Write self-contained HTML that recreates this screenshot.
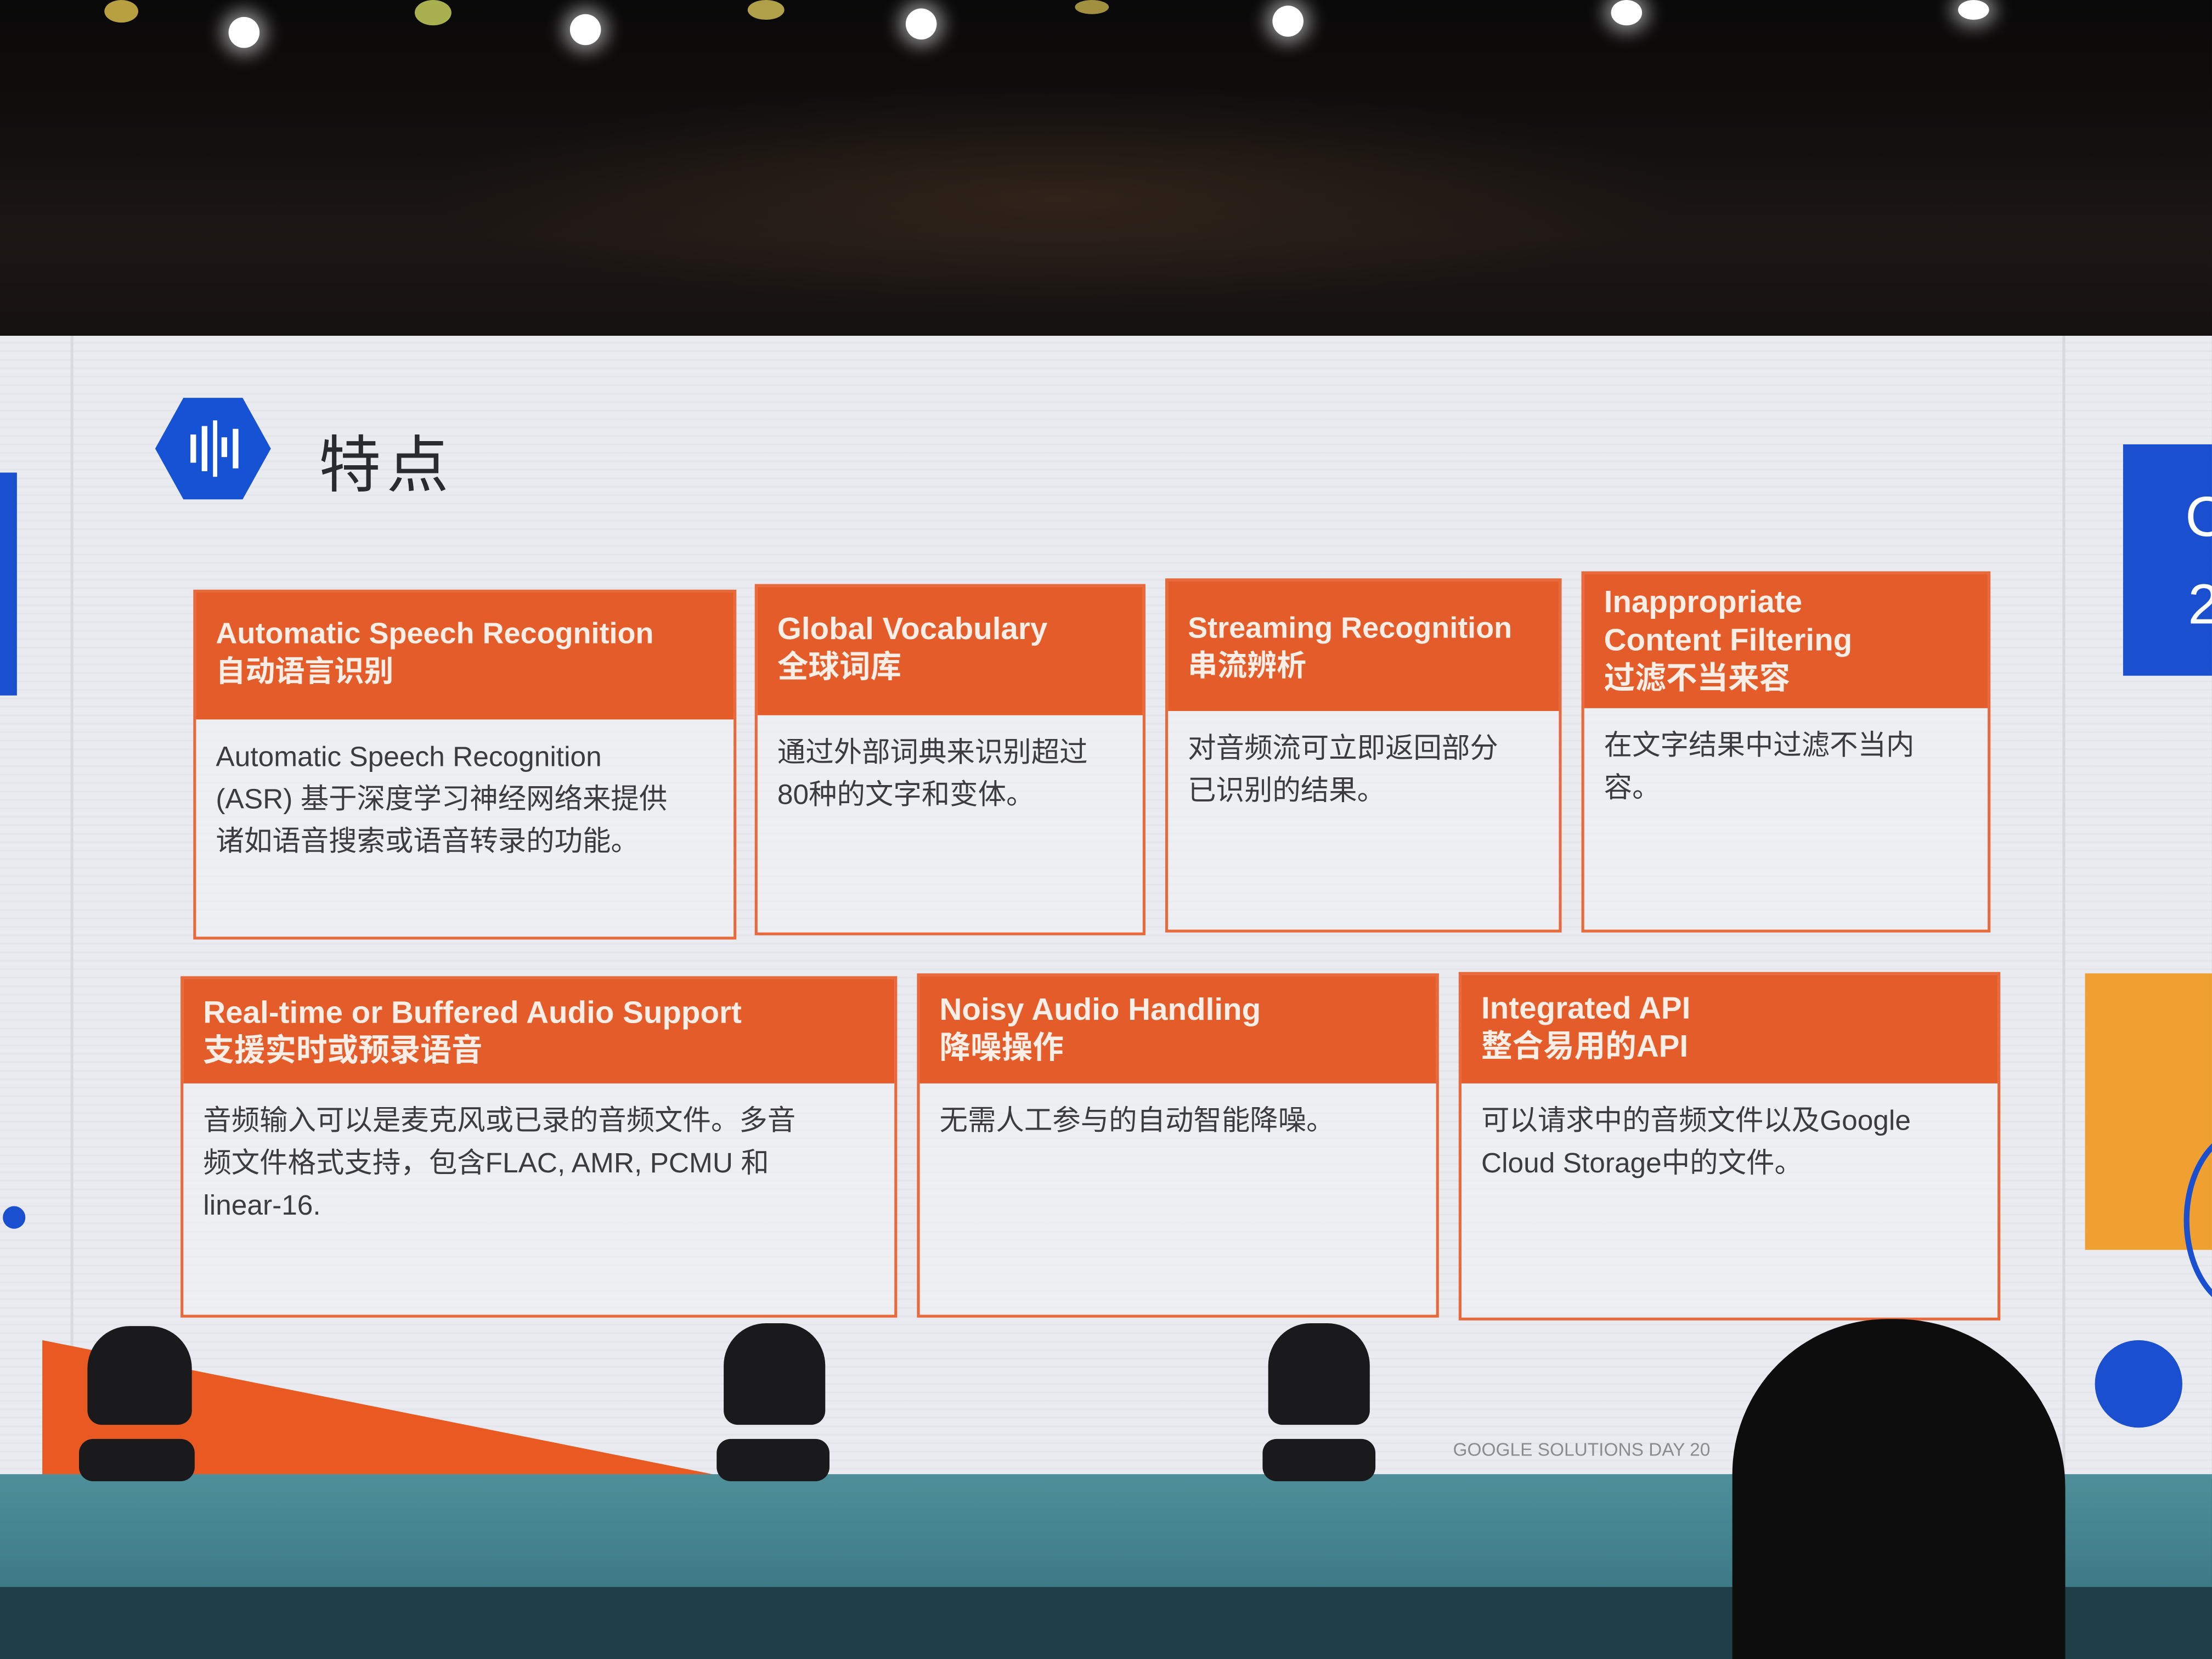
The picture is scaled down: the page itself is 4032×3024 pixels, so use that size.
<!DOCTYPE html>
<html><head><meta charset="utf-8">
<style>
html,body{margin:0;padding:0;width:4032px;height:3024px;overflow:hidden;background:#1f3f48;}
#s{position:absolute;left:0;top:0;width:1568px;height:1176px;transform:scale(2.5714);transform-origin:0 0;font-family:"Liberation Sans","Noto Sans CJK SC",sans-serif;overflow:hidden;}
.abs{position:absolute;}
.screen{left:0;top:238px;width:1568px;height:810px;background:repeating-linear-gradient(180deg,#e9ebf0 0px,#e9ebf0 4px,#e2e4ea 5px,#e9ebf0 6px);}
.card{position:absolute;border:2px solid #e8693a;background:rgba(240,241,245,0.6);box-sizing:border-box;}
.hd{background:#e35c2a;color:#fbeee6;font-weight:bold;font-size:21px;line-height:27px;padding:16px 14px 0 14px;box-sizing:border-box;white-space:nowrap;}
.bd{color:#3c3c40;font-size:20px;line-height:30px;padding:12px 14px;white-space:nowrap;}
.light{position:absolute;border-radius:50%;background:#fff;box-shadow:0 0 12px 5px rgba(255,255,255,.5);}
.fix{position:absolute;background:#1a1a1c;border-radius:10px;}
</style></head><body>
<div id="s">
<div class="abs" style="left:0;top:0;width:1568px;height:240px;background:linear-gradient(180deg,#0a0909 0%,#120f0d 40%,#1d1714 70%,#15110f 100%)"></div>
<div class="abs" style="left:300px;top:60px;width:900px;height:160px;border-radius:50%;background:radial-gradient(ellipse,rgba(70,50,35,.5),rgba(0,0,0,0) 70%)"></div>
<div class="light" style="left:162px;top:12px;width:22px;height:22px"></div>
<div class="light" style="left:404px;top:10px;width:22px;height:22px"></div>
<div class="light" style="left:642px;top:6px;width:22px;height:22px"></div>
<div class="light" style="left:902px;top:4px;width:22px;height:22px"></div>
<div class="light" style="left:1142px;top:0px;width:22px;height:18px"></div>
<div class="light" style="left:1388px;top:0px;width:22px;height:14px"></div>
<div class="abs" style="left:74px;top:0;width:24px;height:16px;border-radius:50%;background:#b8a040"></div>
<div class="abs" style="left:294px;top:0;width:26px;height:18px;border-radius:50%;background:#a8b050"></div>
<div class="abs" style="left:530px;top:0;width:26px;height:14px;border-radius:50%;background:#b0a048"></div>
<div class="abs" style="left:762px;top:0;width:24px;height:10px;border-radius:50%;background:#a09040"></div>

<div class="abs screen"></div>
<div class="abs" style="left:50px;top:238px;width:2px;height:810px;background:#d8dae0"></div>
<div class="abs" style="left:1462px;top:238px;width:2px;height:810px;background:#d8dae0"></div>
<div class="abs" style="left:0;top:335px;width:12px;height:158px;background:#1a4fd0"></div>
<div class="abs" style="left:2px;top:855px;width:16px;height:16px;border-radius:50%;background:#1a4fd0"></div>
<div class="abs" style="left:1505px;top:315px;width:63px;height:164px;background:#1a4fd0;color:#fff;font-size:40px;overflow:hidden"><span style="position:absolute;left:44px;top:30px">C</span><span style="position:absolute;left:46px;top:92px">2</span></div>
<div class="abs" style="left:1478px;top:690px;width:90px;height:196px;background:#f0a030"></div>
<div class="abs" style="left:1548px;top:800px;width:20px;height:130px;overflow:hidden"><div style="width:80px;height:122px;border:4px solid #1a4fd0;border-radius:50%"></div></div>
<div class="abs" style="left:1485px;top:950px;width:62px;height:62px;border-radius:50%;background:#1a4fd0"></div>

<svg class="abs" style="left:108px;top:280px" width="86" height="76" viewBox="0 0 86 76">
<polygon points="22,2 64,2 84,38 64,74 22,74 2,38" fill="#1553d4"/>
<g fill="#fff"><rect x="27" y="28" width="4" height="20"/><rect x="35" y="22" width="4" height="32"/><rect x="43" y="18" width="3" height="40"/><rect x="49" y="30" width="4" height="14"/><rect x="57" y="24" width="4" height="28"/></g>
</svg>
<div class="abs" style="left:226px;top:294px;font-size:44px;color:#2a2b30;letter-spacing:4px">特点</div>

<div class="card" style="left:137px;top:418px;width:385px;height:248px">
<div class="hd" style="height:90px">Automatic Speech Recognition<br>自动语言识别</div>
<div class="bd">Automatic Speech Recognition<br>(ASR) 基于深度学习神经网络来提供<br>诸如语音搜索或语音转录的功能。</div></div>
<div class="card" style="left:535px;top:414px;width:277px;height:249px">
<div class="hd" style="height:91px;font-size:22px">Global Vocabulary<br>全球词库</div>
<div class="bd">通过外部词典来识别超过<br>80种的文字和变体。</div></div>
<div class="card" style="left:826px;top:410px;width:281px;height:251px">
<div class="hd" style="height:92px;padding-top:20px">Streaming Recognition<br>串流辨析</div>
<div class="bd">对音频流可立即返回部分<br>已识别的结果。</div></div>
<div class="card" style="left:1121px;top:405px;width:290px;height:256px">
<div class="hd" style="height:95px;padding-top:6px;font-size:22px">Inappropriate<br>Content Filtering<br>过滤不当来容</div>
<div class="bd">在文字结果中过滤不当内<br>容。</div></div>

<div class="card" style="left:128px;top:692px;width:508px;height:242px">
<div class="hd" style="height:74px;padding-top:10px;font-size:22px">Real-time or Buffered Audio Support<br>支援实时或预录语音</div>
<div class="bd">音频输入可以是麦克风或已录的音频文件。多音<br>频文件格式支持，包含FLAC, AMR, PCMU 和<br>linear-16.</div></div>
<div class="card" style="left:650px;top:690px;width:370px;height:244px">
<div class="hd" style="height:76px;padding-top:10px;font-size:22px">Noisy Audio Handling<br>降噪操作</div>
<div class="bd">无需人工参与的自动智能降噪。</div></div>
<div class="card" style="left:1034px;top:689px;width:384px;height:247px">
<div class="hd" style="height:77px;padding-top:10px;font-size:22px">Integrated API<br>整合易用的API</div>
<div class="bd">可以请求中的音频文件以及Google<br>Cloud Storage中的文件。</div></div>

<svg class="abs" style="left:0;top:940px" width="1568" height="110"><polygon points="30,10 520,108 30,108" fill="#e85a22"/></svg>
<div class="abs" style="left:1030px;top:1020px;font-size:13px;color:#8a8c90">GOOGLE SOLUTIONS DAY 20</div>
<div class="abs" style="left:0;top:1045px;width:1568px;height:80px;background:linear-gradient(180deg,#4e8f9a,#3c7a86)"></div>
<div class="abs" style="left:0;top:1125px;width:1568px;height:51px;background:#1f3f48"></div>

<div class="fix" style="left:62px;top:940px;width:74px;height:70px;border-radius:30px 30px 10px 10px"></div>
<div class="fix" style="left:56px;top:1020px;width:82px;height:30px"></div>
<div class="fix" style="left:513px;top:938px;width:72px;height:72px;border-radius:30px 30px 10px 10px"></div>
<div class="fix" style="left:508px;top:1020px;width:80px;height:30px"></div>
<div class="fix" style="left:899px;top:938px;width:72px;height:72px;border-radius:30px 30px 10px 10px"></div>
<div class="fix" style="left:895px;top:1020px;width:80px;height:30px"></div>

<div class="abs" style="left:1228px;top:935px;width:236px;height:241px;background:#0e0d0d;border-radius:110px 120px 0 0"></div>
</div>
</body></html>
